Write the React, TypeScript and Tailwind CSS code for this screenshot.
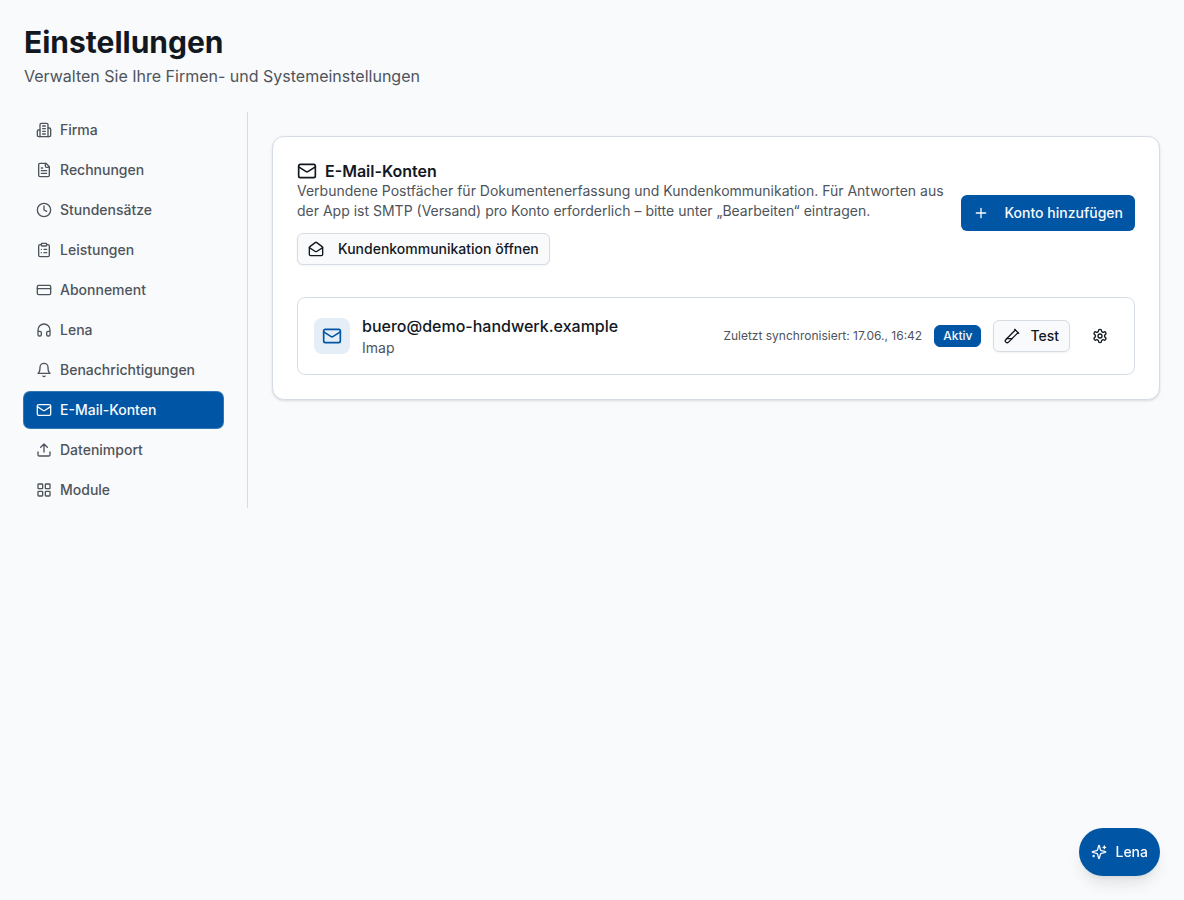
import type { ReactNode } from "react";

type IconProps = { className?: string; children?: ReactNode };

function Icon({ className = "size-4", children }: IconProps) {
  return (
    <svg
      viewBox="0 0 24 24"
      fill="none"
      stroke="currentColor"
      strokeWidth="2"
      strokeLinecap="round"
      strokeLinejoin="round"
      aria-hidden="true"
      className={`shrink-0 ${className}`}
    >
      {children}
    </svg>
  );
}

const MailIcon = ({ className }: IconProps) => (
  <Icon className={className}>
    <rect width="20" height="16" x="2" y="4" rx="2" />
    <path d="m22 7-8.97 5.7a1.94 1.94 0 0 1-2.06 0L2 7" />
  </Icon>
);

const navItems: { label: string; icon: ReactNode }[] = [
  {
    label: "Firma",
    icon: (
      <Icon>
        <path d="M6 22V4a2 2 0 0 1 2-2h8a2 2 0 0 1 2 2v18Z" />
        <path d="M6 12H4a2 2 0 0 0-2 2v6a2 2 0 0 0 2 2h2" />
        <path d="M18 9h2a2 2 0 0 1 2 2v9a2 2 0 0 1-2 2h-2" />
        <path d="M10 6h4M10 10h4M10 14h4M10 18h4" />
      </Icon>
    ),
  },
  {
    label: "Rechnungen",
    icon: (
      <Icon>
        <path d="M15 2H6a2 2 0 0 0-2 2v16a2 2 0 0 0 2 2h12a2 2 0 0 0 2-2V7Z" />
        <path d="M14 2v4a2 2 0 0 0 2 2h4" />
        <path d="M10 9H8M16 13H8M16 17H8" />
      </Icon>
    ),
  },
  {
    label: "Stundensätze",
    icon: (
      <Icon>
        <circle cx="12" cy="12" r="10" />
        <path d="M12 6v6l4 2" />
      </Icon>
    ),
  },
  {
    label: "Leistungen",
    icon: (
      <Icon>
        <rect width="8" height="4" x="8" y="2" rx="1" />
        <path d="M16 4h2a2 2 0 0 1 2 2v14a2 2 0 0 1-2 2H6a2 2 0 0 1-2-2V6a2 2 0 0 1 2-2h2" />
        <path d="M12 11h4M12 16h4M8 11h.01M8 16h.01" />
      </Icon>
    ),
  },
  {
    label: "Abonnement",
    icon: (
      <Icon>
        <rect width="20" height="14" x="2" y="5" rx="2" />
        <path d="M2 10h20" />
      </Icon>
    ),
  },
  {
    label: "Lena",
    icon: (
      <Icon>
        <path d="M3 14h3a2 2 0 0 1 2 2v3a2 2 0 0 1-2 2H5a2 2 0 0 1-2-2v-7a9 9 0 0 1 18 0v7a2 2 0 0 1-2 2h-1a2 2 0 0 1-2-2v-3a2 2 0 0 1 2-2h3" />
      </Icon>
    ),
  },
  {
    label: "Benachrichtigungen",
    icon: (
      <Icon>
        <path d="M6 8a6 6 0 0 1 12 0c0 7 3 9 3 9H3s3-2 3-9" />
        <path d="M10.3 21a1.94 1.94 0 0 0 3.4 0" />
      </Icon>
    ),
  },
  { label: "E-Mail-Konten", icon: <MailIcon /> },
  {
    label: "Datenimport",
    icon: (
      <Icon>
        <path d="M21 15v4a2 2 0 0 1-2 2H5a2 2 0 0 1-2-2v-4" />
        <path d="m17 8-5-5-5 5M12 3v12" />
      </Icon>
    ),
  },
  {
    label: "Module",
    icon: (
      <Icon>
        <rect width="7" height="7" x="3" y="3" rx="1" />
        <rect width="7" height="7" x="14" y="3" rx="1" />
        <rect width="7" height="7" x="14" y="14" rx="1" />
        <rect width="7" height="7" x="3" y="14" rx="1" />
      </Icon>
    ),
  },
];

function SettingsNav() {
  return (
    <nav aria-label="Einstellungen" className="flex w-56 shrink-0 flex-col gap-1 border-r border-[#d8dbe0] pr-6">
      {navItems.map(({ label, icon }) => {
        const active = label === "E-Mail-Konten";
        return (
          <button
            key={label}
            type="button"
            aria-current={active ? "page" : undefined}
            className={`flex h-9 items-center gap-2 rounded-md px-3 text-sm font-medium ${
              active ? "bg-[#0055a5] text-[#f8fafc] ring-1 ring-[#0055a5]/80" : "text-[#4e545b]"
            }`}
          >
            {icon}
            {label}
          </button>
        );
      })}
    </nav>
  );
}

function AccountRow() {
  return (
    <div className="flex items-center justify-between gap-4 rounded-lg border border-[#d5dce3] p-4">
      <div className="flex items-center gap-3">
        <div className="rounded-lg bg-[#e5eef6] p-2 text-[#0055a5]">
          <MailIcon className="size-5" />
        </div>
        <div>
          <p className="text-base font-medium">buero@demo-handwerk.example</p>
          <p className="text-sm text-[#4e545b]">Imap</p>
        </div>
      </div>
      <div className="flex items-center gap-3">
        <span className="text-xs text-[#4e545b]">Zuletzt synchronisiert: 17.06., 16:42</span>
        <span className="rounded-md border border-[#0055a5] bg-[#0055a5] px-2 py-0.5 text-xs font-medium text-[#f8fafc]">
          Aktiv
        </span>
        <button
          type="button"
          className="flex h-8 items-center gap-2.5 rounded-md border border-[#d5dce3] bg-[#f9fafc] px-2.5 text-sm font-medium shadow-xs"
        >
          <Icon>
            <path d="M21 7 6.82 21.18a2.83 2.83 0 0 1-3.99-.01a2.83 2.83 0 0 1 0-4L17 3" />
            <path d="m16 2 6 6M12 16H4" />
          </Icon>
          Test
        </button>
        <button type="button" aria-label="Konto bearbeiten" className="flex h-8 items-center rounded-md px-2.5">
          <Icon>
            <path d="M12.22 2h-.44a2 2 0 0 0-2 2v.18a2 2 0 0 1-1 1.73l-.43.25a2 2 0 0 1-2 0l-.15-.08a2 2 0 0 0-2.73.73l-.22.38a2 2 0 0 0 .73 2.73l.15.1a2 2 0 0 1 1 1.72v.51a2 2 0 0 1-1 1.74l-.15.09a2 2 0 0 0-.73 2.73l.22.38a2 2 0 0 0 2.73.73l.15-.08a2 2 0 0 1 2 0l.43.25a2 2 0 0 1 1 1.73V20a2 2 0 0 0 2 2h.44a2 2 0 0 0 2-2v-.18a2 2 0 0 1 1-1.73l.43-.25a2 2 0 0 1 2 0l.15.08a2 2 0 0 0 2.73-.73l.22-.39a2 2 0 0 0-.73-2.73l-.15-.08a2 2 0 0 1-1-1.74v-.5a2 2 0 0 1 1-1.74l.15-.09a2 2 0 0 0 .73-2.73l-.22-.38a2 2 0 0 0-2.73-.73l-.15.08a2 2 0 0 1-2 0l-.43-.25a2 2 0 0 1-1-1.73V4a2 2 0 0 0-2-2z" />
            <circle cx="12" cy="12" r="3" />
          </Icon>
        </button>
      </div>
    </div>
  );
}

function AccountsCard() {
  return (
    <section className="flex flex-col gap-8 rounded-xl border border-[#d5dce3] bg-white p-6 shadow-sm">
      <div className="flex items-center justify-between gap-4">
        <div className="flex min-w-0 flex-col items-start">
          <h2 className="flex items-center gap-2 text-base leading-5 font-semibold">
            <MailIcon className="size-5" />
            E-Mail-Konten
          </h2>
          <p className="text-sm text-[#4e545b]">
            Verbundene Postfächer für Dokumentenerfassung und Kundenkommunikation. Für Antworten aus der App ist SMTP
            (Versand) pro Konto erforderlich – bitte unter „Bearbeiten“ eintragen.
          </p>
          <a
            href="#kundenkommunikation"
            className="mt-3 flex h-8 items-center gap-3.5 rounded-md border border-[#d5dce3] bg-[#f9fafc] px-2.5 text-sm font-medium shadow-xs"
          >
            <Icon>
              <path d="M21.2 8.4c.5.38.8.97.8 1.6v10a2 2 0 0 1-2 2H4a2 2 0 0 1-2-2V10a2 2 0 0 1 .8-1.6l8-6a2 2 0 0 1 2.4 0l8 6Z" />
              <path d="m22 10-8.97 5.7a1.94 1.94 0 0 1-2.06 0L2 10" />
            </Icon>
            Kundenkommunikation öffnen
          </a>
        </div>
        <button
          type="button"
          className="flex h-9 shrink-0 items-center gap-4 rounded-md bg-[#0055a5] px-3 text-sm font-medium text-[#f8fafc]"
        >
          <Icon>
            <path d="M5 12h14M12 5v14" />
          </Icon>
          Konto hinzufügen
        </button>
      </div>
      <AccountRow />
    </section>
  );
}

export default function App() {
  return (
    <div className="min-h-screen bg-[#f9fafc] p-6 font-[Inter,sans-serif] text-[#12181f]">
      <header>
        <h1 className="text-3xl font-bold">Einstellungen</h1>
        <p className="mt-1 text-base text-[#4e545b]">Verwalten Sie Ihre Firmen- und Systemeinstellungen</p>
      </header>
      <div className="mt-6 flex items-start gap-6">
        <SettingsNav />
        <main className="min-w-0 flex-1 pt-6">
          <AccountsCard />
        </main>
      </div>
      <button
        type="button"
        className="fixed right-6 bottom-6 flex h-12 items-center gap-2 rounded-full bg-[#0055a5] px-3 text-sm font-medium text-[#f8fafc] shadow-lg"
      >
        <Icon>
          <path d="M9.937 15.5A2 2 0 0 0 8.5 14.063l-6.135-1.582a.5.5 0 0 1 0-.962L8.5 9.936A2 2 0 0 0 9.937 8.5l1.582-6.135a.5.5 0 0 1 .963 0L14.063 8.5A2 2 0 0 0 15.5 9.937l6.135 1.581a.5.5 0 0 1 0 .964L15.5 14.063a2 2 0 0 0-1.437 1.437l-1.582 6.135a.5.5 0 0 1-.963 0z" />
          <path d="M20 3v4M22 5h-4M4 17v2M5 18H3" />
        </Icon>
        Lena
      </button>
    </div>
  );
}
